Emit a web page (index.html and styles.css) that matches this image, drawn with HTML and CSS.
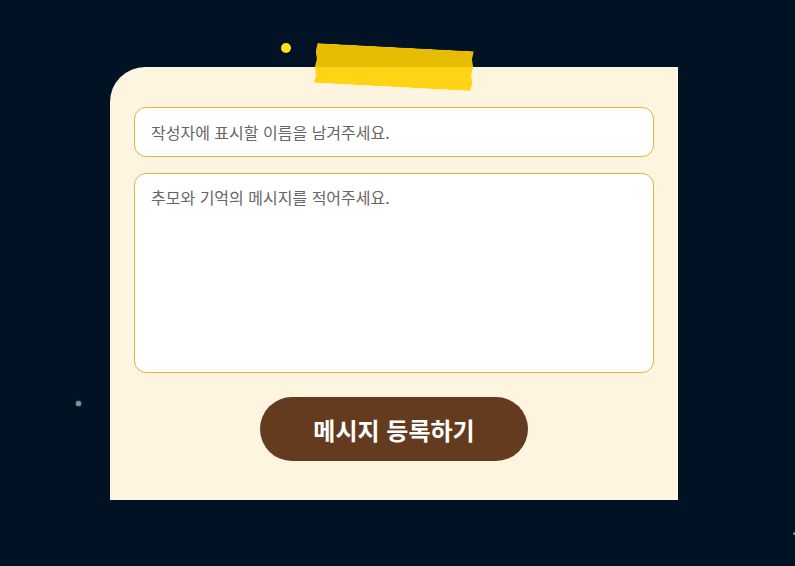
FILE: index.html
```html
<!DOCTYPE html>
<html lang="ko">
<head>
<meta charset="UTF-8" />
<meta name="viewport" content="width=device-width, initial-scale=1" />
<title>추모 메시지</title>
<link rel="stylesheet" href="styles.css">
</head>
<body>
<span class="star star-yellow"></span>
<span class="star star-grey"></span>
<span class="star star-edge"></span>

<main class="page">
  <form class="note" id="messageForm">
    <span class="tape"></span>
    <input type="text" class="field" placeholder="작성자에 표시할 이름을 남겨주세요." />
    <textarea class="field field-area" placeholder="추모와 기억의 메시지를 적어주세요."></textarea>
    <button type="submit" class="submit">메시지 등록하기</button>
  </form>
</main>
</body>
</html>
```

FILE: styles.css
```css
body {
  margin: 0;
  background: #001224;
  font-family: "Noto Sans CJK KR", "Noto Sans", sans-serif;
  min-height: 566px;
  position: relative;
  overflow: hidden;
}
.page {
  padding: 67px 0 0 110px;
}
.note {
  position: relative;
  width: 568px;
  box-sizing: border-box;
  padding: 40px 24px 39px 24px;
  background: #fdf5e0;
  border-radius: 35px 0 0 0;
  display: flex;
  flex-direction: column;
  gap: 16px;
}
/* masking tape on top of the note */
.tape {
  position: absolute;
  left: 205px;
  top: -20px;
  width: 158px;
  height: 40px;
  background: #ffd000;
  opacity: 0.9;
  transform: rotate(3deg);
  clip-path: polygon(1% 0, 100% 0, 99% 20%, 100% 40%, 99% 60%, 100% 80%, 99% 100%, 0 100%, 1% 80%, 0 60%, 1% 40%, 0 20%);
}
.field {
  display: block;
  width: 100%;
  box-sizing: border-box;
  height: 50px;
  padding: 0 16px;
  border: 1px solid #e1b43a;
  border-radius: 12px;
  background: #fff;
  font-family: inherit;
  font-size: 16px;
  color: #333;
}
.field::placeholder {
  color: #666;
}
.field:focus {
  outline: none;
  border-color: #c9951a;
}
.field-area {
  height: 200px;
  padding: 11px 16px;
  resize: none;
  line-height: 1.5;
}
.submit {
  align-self: center;
  margin-top: 8px;
  width: 268px;
  height: 64px;
  border: none;
  border-radius: 32px;
  background: #653b1f;
  color: #fff;
  font-family: inherit;
  font-size: 24px;
  font-weight: 700;
  cursor: pointer;
}
.submit:hover {
  background: #53301a;
}
.star {
  position: absolute;
  border-radius: 50%;
}
.star-yellow {
  left: 281px;
  top: 43px;
  width: 10px;
  height: 10px;
  background: #ffe01a;
}
.star-grey {
  left: 76px;
  top: 401px;
  width: 5px;
  height: 5px;
  background: #8894a2;
  box-shadow: 0 0 2px #8894a2;
}
.star-edge {
  left: 793px;
  top: 532px;
  width: 3px;
  height: 3px;
  background: #7d8896;
}
```
